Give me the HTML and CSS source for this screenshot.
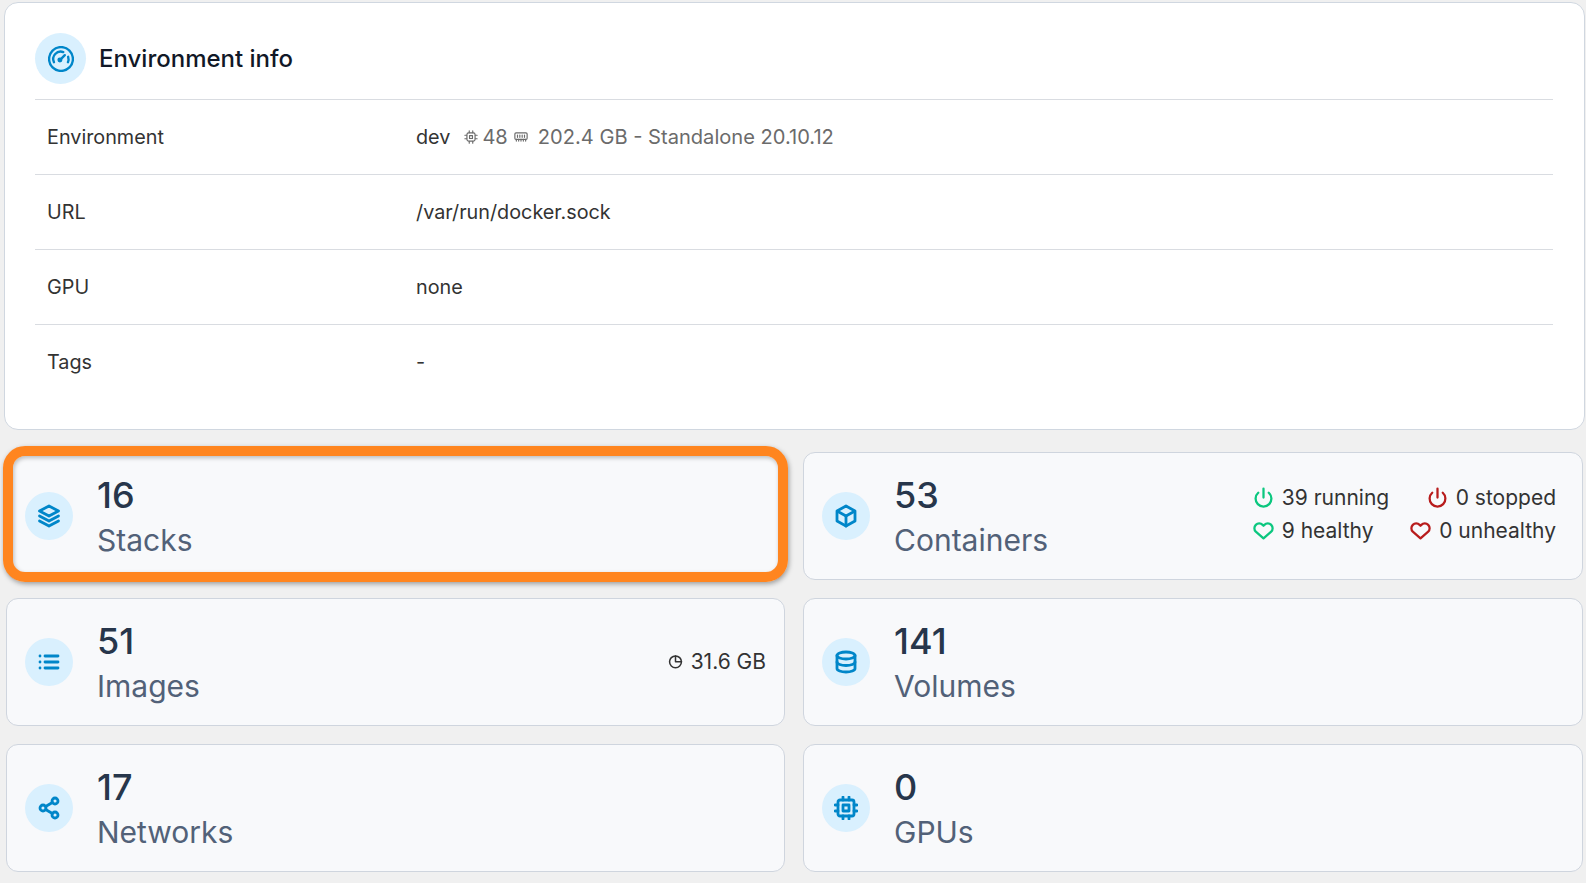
FILE: index.html
```html
<!DOCTYPE html>
<html lang="en">
<head>
    <meta charset="UTF-8">
    <title>Environment info</title>
    <link rel="stylesheet" href="styles.css">
</head>
<body>
    <section class="info-card">
        <header class="info-head">
            <span class="icon-circle icon-circle-lg">
                <svg class="icon-lg" viewBox="0 0 24 24"><circle cx="12" cy="12" r="11"/><path d="M5.500 15a6.900 6.900 0 0 1 8.600-9.400"/><path d="M18.600 10a7 7 0 0 1-.2 5"/><path d="M11 13l4.500-4.500"/><circle class="fill" cx="11" cy="13" r="1.200"/></svg>
            </span>
            <h1>Environment info</h1>
        </header>
        <div class="info-row">
            <div class="info-key">Environment</div>
            <div class="info-val">dev<span class="muted env-meta">
                    <svg class="icon-xs" viewBox="0 0 24 24"><rect x="5" y="5" width="14" height="14" rx="3"/><rect x="9.500" y="9.500" width="5" height="5"/><path d="M9 1.500v3M15 1.500v3M9 19.500v3M15 19.500v3M1.500 9h3M1.500 15h3M19.500 9h3M19.500 15h3"/></svg>
                    <span class="cpu">48</span>
                    <svg class="icon-xs icon-mem" viewBox="0 0 24 24"><rect x="1.500" y="5" width="21" height="11" rx="2"/><path d="M6 8.500v4M10 8.500v4M14 8.500v4M18 8.500v4M4 16v3M8 16v3M12 16v3M16 16v3M20 16v3"/></svg>
                    <span class="mem">202.4 GB - Standalone 20.10.12</span>
                </span>
            </div>
        </div>
        <div class="info-row">
            <div class="info-key">URL</div>
            <div class="info-val">/var/run/docker.sock</div>
        </div>
        <div class="info-row">
            <div class="info-key">GPU</div>
            <div class="info-val">none</div>
        </div>
        <div class="info-row">
            <div class="info-key">Tags</div>
            <div class="info-val">-</div>
        </div>
    </section>

    <div class="tiles">
        <div class="tile tile-marked">
            <span class="icon-circle">
                <svg class="icon icon-bold" viewBox="0 0 24 24"><path class="fill-soft" d="M12 2l9.500 5-9.500 5-9.500-5z"/><path d="M2.500 12l9.500 5 9.500-5"/><path d="M2.500 17l9.500 5 9.500-5"/></svg>
            </span>
            <div class="tile-text"><div class="tile-num">16</div><div class="tile-name">Stacks</div></div>
        </div>
        <div class="tile">
            <span class="icon-circle">
                <svg class="icon icon-bold" viewBox="0 0 24 24"><path d="M12 2l9 5v10l-9 5-9-5V7z"/><path d="M3.500 7.300L12 12l8.500-4.700"/><path d="M12 12v10"/></svg>
            </span>
            <div class="tile-text"><div class="tile-num">53</div><div class="tile-name">Containers</div></div>
            <div class="tile-stats">
                <div class="stat-col">
                    <div class="stat"><svg class="icon-stat ok" viewBox="0 0 24 24"><path d="M18 6.600a9 9 0 1 1-12 0"/><path d="M12 2v10"/></svg>39 running</div>
                    <div class="stat"><svg class="icon-stat ok" viewBox="0 0 24 24"><path d="M20.800 5.600a5.500 5.500 0 0 0-7.800 0L12 6.600l-1-1a5.500 5.500 0 0 0-7.800 7.800L12 21l8.800-7.600a5.500 5.500 0 0 0 0-7.800z"/></svg>9 healthy</div>
                </div>
                <div class="stat-col stat-col-end">
                    <div class="stat"><svg class="icon-stat bad" viewBox="0 0 24 24"><path d="M18 6.600a9 9 0 1 1-12 0"/><path d="M12 2v10"/></svg>0 stopped</div>
                    <div class="stat"><svg class="icon-stat bad" viewBox="0 0 24 24"><path d="M20.800 5.600a5.500 5.500 0 0 0-7.800 0L12 6.600l-1-1a5.500 5.500 0 0 0-7.800 7.800L12 21l8.800-7.600a5.500 5.500 0 0 0 0-7.800z"/></svg>0 unhealthy</div>
                </div>
            </div>
        </div>
        <div class="tile">
            <span class="icon-circle">
                <svg class="icon icon-bold" viewBox="0 0 24 24"><path d="M8 6h13M8 12h13M8 18h13M3 6h.01M3 12h.01M3 18h.01"/></svg>
            </span>
            <div class="tile-text"><div class="tile-num">51</div><div class="tile-name">Images</div></div>
            <div class="tile-stats tile-stats-wide">
                <div class="stat"><svg class="icon-pie" viewBox="0 0 24 24"><circle cx="12" cy="12.500" r="9.500"/><path d="M12 3v9.500h9.500"/></svg>31.6 GB</div>
            </div>
        </div>
        <div class="tile">
            <span class="icon-circle">
                <svg class="icon icon-bold" viewBox="0 0 24 24"><ellipse cx="12" cy="5.500" rx="9" ry="3.500"/><path d="M3 5.500v13c0 1.900 4 3.500 9 3.500s9-1.600 9-3.500v-13"/><path d="M3 12c0 1.900 4 3.500 9 3.500s9-1.600 9-3.500"/></svg>
            </span>
            <div class="tile-text"><div class="tile-num">141</div><div class="tile-name">Volumes</div></div>
        </div>
        <div class="tile">
            <span class="icon-circle">
                <svg class="icon icon-bold" viewBox="0 0 24 24"><circle cx="18" cy="5" r="3"/><circle cx="6" cy="12" r="3"/><circle cx="18" cy="19" r="3"/><path d="M8.600 13.500l6.800 4M15.400 6.500l-6.800 4"/></svg>
            </span>
            <div class="tile-text"><div class="tile-num">17</div><div class="tile-name">Networks</div></div>
        </div>
        <div class="tile">
            <span class="icon-circle">
                <svg class="icon icon-bold" viewBox="0 0 24 24"><rect x="4" y="4" width="16" height="16" rx="2"/><rect x="9" y="9" width="6" height="6"/><path d="M9 1v3M15 1v3M9 20v3M15 20v3M20 9h3M20 15h3M1 9h3M1 15h3"/></svg>
            </span>
            <div class="tile-text"><div class="tile-num">0</div><div class="tile-name">GPUs</div></div>
        </div>
    </div>
</body>
</html>
```

FILE: styles.css
```css
html, body {
    margin: 0;
    height: 100%;
}

body {
    background: #f0f0f0;
    font-family: Inter, "Liberation Sans", sans-serif;
    color: #333;
    overflow: hidden;
}

svg {
    fill: none;
    stroke-linecap: round;
    stroke-linejoin: round;
    flex: none;
}

/* Environment info panel */
.info-card {
    box-sizing: border-box;
    height: 428px;
    margin: 2px 1px 0 4px;
    padding: 30px 31px 0 30px;
    background: #fff;
    border: 1px solid #d0d7e0;
    border-radius: 14px;
}

.info-head {
    display: flex;
    align-items: center;
    gap: 13px;
    padding-bottom: 15px;
    border-bottom: 1px solid #d9dce1;
}

h1 {
    margin: 0;
    font-size: 24px;
    font-weight: 500;
    color: #111827;
}

.info-row {
    display: flex;
    align-items: center;
    height: 74px;
    font-size: 19.800px;
    border-bottom: 1px solid #d9dce1;
}

.info-row:last-child {
    border-bottom: none;
}

.info-key {
    width: 369px;
    padding-left: 12px;
}

.muted {
    color: #6b6b6b;
}

.env-meta {
    display: inline-flex;
    align-items: center;
    margin-left: 14px;
    font-size: 20.100px;
}

.cpu {
    margin-left: 4px;
}

.icon-mem {
    margin-left: 6px;
}

.mem {
    margin-left: 10px;
}

.icon-xs {
    width: 14px;
    height: 14px;
    stroke: #6b6b6b;
    stroke-width: 2;
}

/* Icon bubbles */
.icon-circle {
    display: flex;
    align-items: center;
    justify-content: center;
    width: 48px;
    height: 48px;
    border-radius: 50%;
    background: #d9f0fe;
    flex: none;
}

.icon-circle-lg {
    width: 51px;
    height: 51px;
}

.icon, .icon-lg {
    stroke: #0086c9;
    stroke-width: 2.400;
}

.icon {
    width: 24px;
    height: 24px;
}

.icon-bold {
    stroke-width: 2.800;
}

.icon-lg {
    width: 26px;
    height: 26px;
    stroke-width: 2.200;
}

.icon-lg .fill {
    fill: #0086c9;
}

.fill-soft {
    fill: #d9f0fe;
}

/* Resource tiles */
.tiles {
    display: grid;
    grid-template-columns: 779px 1fr;
    grid-auto-rows: 128px;
    gap: 18px;
    margin: 22px 3px 0 6px;
}

.tile {
    position: relative;
    display: flex;
    align-items: center;
    gap: 24px;
    padding: 0 26px 0 18px;
    background: #f8f9fb;
    border: 1px solid #cfd5de;
    border-radius: 12px;
}

/* the orange annotation drawn over the first tile */
.tile-marked::after {
    content: "";
    position: absolute;
    top: -7px;
    left: -4px;
    right: -4px;
    bottom: -3px;
    border: 10px solid #ff851f;
    border-radius: 22px;
    box-shadow: 1px 2px 5px rgba(0, 0, 0, 0.35), inset 1px 2px 4px rgba(0, 0, 0, 0.25);
}

.tile-text {
    flex: 1;
    padding-top: 2px;
}

.tile-num {
    font-size: 36px;
    font-weight: 500;
    line-height: 45px;
    color: #27364b;
}

.tile-name {
    font-size: 30px;
    line-height: 44px;
    color: #526178;
}

.tile-stats {
    display: flex;
    gap: 21px;
    margin-top: -4px;
    font-size: 21px;
    color: #333;
}

.tile-stats-wide {
    margin-top: -2px;
    margin-right: -8px;
}

.stat-col {
    display: flex;
    flex-direction: column;
    gap: 8px;
}

.stat-col-end {
    align-items: flex-end;
}

.stat {
    display: flex;
    align-items: center;
    gap: 8px;
    line-height: 25px;
}

.icon-stat {
    width: 21px;
    height: 21px;
    stroke-width: 2.600;
}

.icon-stat.ok {
    stroke: #0bc77f;
}

.icon-stat.bad {
    stroke: #b81c1c;
}

.icon-pie {
    width: 15px;
    height: 15px;
    stroke: #333;
    stroke-width: 2.400;
}
```
